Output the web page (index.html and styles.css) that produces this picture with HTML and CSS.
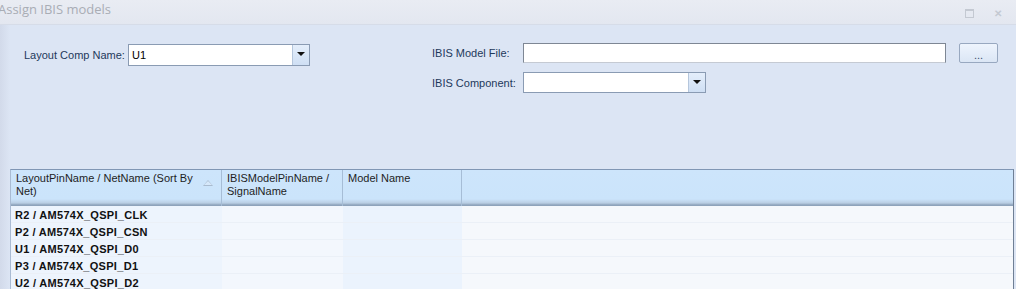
FILE: index.html
```html
<!DOCTYPE html>
<html lang="en">

<head>
    <meta charset="UTF-8">
    <title>Assign IBIS models</title>
    <link rel="stylesheet" href="styles.css">
</head>

<body>
    <div class="window">
        <div class="titlebar">
            <span class="title">Assign IBIS models</span>
            <div class="win-buttons">
                <span class="btn-max"></span>
                <span class="btn-close">&#x2715;</span>
            </div>
        </div>

        <div class="content">
            <div class="form">
                <div class="form-left">
                    <div class="field">
                        <label class="lbl lbl-comp">Layout Comp Name:</label>
                        <div class="combo combo-comp">
                            <span class="combo-text">U1</span>
                            <span class="combo-arrow"></span>
                        </div>
                    </div>
                </div>
                <div class="form-right">
                    <div class="field">
                        <label class="lbl lbl-ibis">IBIS Model File:</label>
                        <div class="textbox"></div>
                        <button class="browse">...</button>
                    </div>
                    <div class="field">
                        <label class="lbl lbl-ibis">IBIS Component:</label>
                        <div class="combo combo-ibis">
                            <span class="combo-text"></span>
                            <span class="combo-arrow"></span>
                        </div>
                    </div>
                </div>
            </div>

            <div class="grid">
                <div class="grid-head">
                    <div class="hcell hcell-sort">LayoutPinName / NetName (Sort By Net)<span class="sort"></span></div>
                    <div class="hcell">IBISModelPinName / SignalName</div>
                    <div class="hcell">Model Name</div>
                    <div class="hcell hcell-last"></div>
                </div>
                <div class="grid-body">
                    <div class="row"><div class="cell c1">R2 / AM574X_QSPI_CLK</div><div class="cell c2"></div><div class="cell c3"></div><div class="cell"></div></div>
                    <div class="row"><div class="cell c1">P2 / AM574X_QSPI_CSN</div><div class="cell c2"></div><div class="cell c3"></div><div class="cell"></div></div>
                    <div class="row"><div class="cell c1">U1 / AM574X_QSPI_D0</div><div class="cell c2"></div><div class="cell c3"></div><div class="cell"></div></div>
                    <div class="row"><div class="cell c1">P3 / AM574X_QSPI_D1</div><div class="cell c2"></div><div class="cell c3"></div><div class="cell"></div></div>
                    <div class="row"><div class="cell c1">U2 / AM574X_QSPI_D2</div><div class="cell c2"></div><div class="cell c3"></div><div class="cell"></div></div>
                </div>
            </div>
        </div>
    </div>
</body>

</html>
```

FILE: styles.css
```css
/* Reset */
body {
    margin: 0;
    padding: 0;
    font-family: 'Liberation Sans', Arial, sans-serif;
    font-size: 11px;
    color: #1e395b;
    background-color: #dce5f4;
    overflow: hidden;
}

.window {
    width: 1016px;
    height: 289px;
    display: flex;
    flex-direction: column;
}

/* Title bar */
.titlebar {
    height: 24px;
    flex-shrink: 0;
    display: flex;
    align-items: center;
    justify-content: space-between;
    background: linear-gradient(#e9ecf3, #e3e7f0);
    border-bottom: 1px solid #d6dce8;
}

.title {
    margin-left: -2px;
    margin-top: -7px;
    font-family: 'Open Sans', sans-serif;
    font-size: 13px;
    color: #a9adb5;
}

.win-buttons {
    display: flex;
    align-items: center;
    gap: 20px;
    margin-right: 14px;
    margin-top: 2px;
}

.btn-max {
    width: 7px;
    height: 6px;
    border: 1px solid #c4c9d2;
    border-top-width: 2px;
}

.btn-close {
    font-size: 10px;
    color: #c4c9d2;
    font-weight: bold;
}

/* Content */
.content {
    flex: 1;
    display: flex;
    flex-direction: column;
    background: linear-gradient(90deg, #d2daea 0, #dce5f4 10px);
}

.form {
    height: 144px;
    display: flex;
    flex-shrink: 0;
}

.form-left {
    padding: 19px 0 0 24px;
    width: 408px;
}

.form-right {
    padding-top: 18px;
    display: flex;
    flex-direction: column;
    gap: 9px;
}

.field {
    display: flex;
    align-items: center;
}

.lbl {
    color: #1e395b;
    white-space: nowrap;
}

.lbl-comp {
    width: 104px;
}

.lbl-ibis {
    width: 91px;
}

/* Inputs */
.combo {
    height: 20px;
    display: flex;
    background-color: #fff;
    border: 1px solid #8a9bb3;
    box-sizing: border-box;
}

.combo-comp {
    width: 182px;
    height: 22px;
}

.combo-ibis {
    width: 183px;
    height: 21px;
}

.combo-text {
    flex: 1;
    padding: 4px 0 0 3px;
    color: #000;
}

.combo-arrow {
    width: 16px;
    border-left: 1px solid #b5c6dc;
    background: linear-gradient(#e4eefb, #cfdff4);
    position: relative;
}

.combo-arrow::after {
    content: '';
    position: absolute;
    left: 4px;
    top: 7px;
    border-left: 4px solid transparent;
    border-right: 4px solid transparent;
    border-top: 4px solid #111;
}

.textbox {
    width: 423px;
    height: 20px;
    box-sizing: border-box;
    background-color: #fff;
    border: 1px solid #7e8794;
    border-bottom-color: #c5cad3;
}

.browse {
    margin-left: 13px;
    width: 39px;
    height: 20px;
    padding: 4px 0 0;
    font-family: 'Liberation Sans', sans-serif;
    font-size: 11px;
    color: #3b4e6e;
    background: linear-gradient(#eef4fd, #dbe6f5);
    border: 1px solid #98a8c0;
    border-radius: 2px;
}

/* Grid */
.grid {
    margin-left: 10px;
    width: 1002px;
    flex: 1;
    display: flex;
    flex-direction: column;
    border-top: 1px solid #8096b4;
    border-left: 1px solid #a9bbd3;
    border-right: 1px solid #6f7f95;
    background-color: #f5f8fc;
}

.grid-head {
    height: 36px;
    display: grid;
    grid-template-columns: 211px 121px 119px 1fr;
    background: linear-gradient(#cde5fb 0, #cbe4fb 29px, #b9cee3 33px, #8ea3bb 35px);
}

.hcell {
    position: relative;
    padding: 2px 2px 0 5px;
    line-height: 13px;
    color: #1e1e1e;
    border-right: 1px solid #a6bdd6;
}

.hcell-sort {
    padding-right: 20px;
}

.hcell-last {
    border-right: none;
}

.sort {
    position: absolute;
    right: 8px;
    top: 10px;
    width: 0;
    height: 0;
    border-left: 5px solid transparent;
    border-right: 5px solid transparent;
    border-bottom: 6px solid #a9bbcf;
}

.sort::after {
    content: '';
    position: absolute;
    left: -4px;
    top: 1px;
    border-left: 4px solid transparent;
    border-right: 4px solid transparent;
    border-bottom: 4px solid #d6e8fa;
}

.grid-body {
    flex: 1;
}

.row {
    height: 17px;
    display: grid;
    grid-template-columns: 211px 121px 119px 1fr;
    border-bottom: 1px solid #ebf0f7;
    box-sizing: border-box;
}

.cell {
    padding: 3px 0 0 4px;
    white-space: nowrap;
}

.c1 {
    font-weight: bold;
    letter-spacing: 0.3px;
    color: #111;
    background-color: #edf4fd;
}

.c2 {
    background-color: #f3f7fd;
}

.c3 {
    background-color: #ebf3fd;
}
```
